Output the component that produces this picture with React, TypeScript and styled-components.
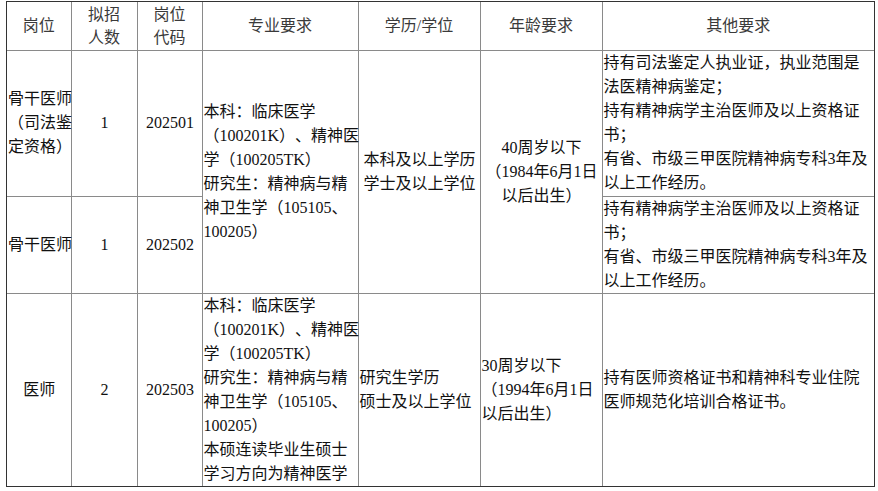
import styled, { createGlobalStyle } from 'styled-components';

const GlobalStyle = createGlobalStyle`
  html, body {
    margin: 0;
    padding: 0;
    background: #ffffff;
  }
  body {
    font-family: "Liberation Serif", "Noto Sans CJK SC", serif;
    text-spacing-trim: space-all;
  }
`;

type Align = 'left' | 'center';

interface Row {
  height: number;
  cells: {
    lines: string[];
    align?: Align;
    rowSpan?: number;
  }[];
}

const colWidths = [64, 66, 65, 156, 122, 122, 272];

const headers: string[][] = [
  ['岗位'],
  ['拟招', '人数'],
  ['岗位', '代码'],
  ['专业要求'],
  ['学历/学位'],
  ['年龄要求'],
  ['其他要求'],
];

const majorLines = [
  '本科：临床医学',
  '（100201K）、精神医',
  '学（100205TK）',
  '研究生：精神病与精',
  '神卫生学（105105、',
  '100205）',
];

const otherLines = [
  '持有精神病学主治医师及以上资格证',
  '书；',
  '有省、市级三甲医院精神病专科3年及',
  '以上工作经历。',
];

const rows: Row[] = [
  {
    height: 146,
    cells: [
      { lines: ['骨干医师', '（司法鉴', '定资格）'] },
      { lines: ['1'] },
      { lines: ['202501'] },
      { lines: majorLines, align: 'left', rowSpan: 2 },
      { lines: ['本科及以上学历', '学士及以上学位'], rowSpan: 2 },
      { lines: ['40周岁以下', '（1984年6月1日', '以后出生）'], rowSpan: 2 },
      {
        lines: ['持有司法鉴定人执业证，执业范围是', '法医精神病鉴定；', ...otherLines],
        align: 'left',
      },
    ],
  },
  {
    height: 96,
    cells: [
      { lines: ['骨干医师'] },
      { lines: ['1'] },
      { lines: ['202502'] },
      { lines: otherLines, align: 'left' },
    ],
  },
  {
    height: 192,
    cells: [
      { lines: ['医师'] },
      { lines: ['2'] },
      { lines: ['202503'] },
      {
        lines: [...majorLines, '本硕连读毕业生硕士', '学习方向为精神医学'],
        align: 'left',
      },
      { lines: ['研究生学历', '硕士及以上学位'], align: 'left' },
      { lines: ['30周岁以下', '（1994年6月1日', '以后出生）'], align: 'left' },
      { lines: ['持有医师资格证书和精神科专业住院', '医师规范化培训合格证书。'], align: 'left' },
    ],
  },
];

const App = () => {
  return (
    <>
      <GlobalStyle />
      <Frame>
        <Table>
          <colgroup>
            {colWidths.map((w, i) => (
              <col key={i} style={{ width: w }} />
            ))}
          </colgroup>
          <thead>
            <HeadRow>
              {headers.map((h, i) => (
                <HeadCell key={i}>
                  {h.map((line, j) => (
                    <Line key={j}>{line}</Line>
                  ))}
                </HeadCell>
              ))}
            </HeadRow>
          </thead>
          <tbody>
            {rows.map((row, i) => (
              <tr key={i} style={{ height: row.height }}>
                {row.cells.map((cell, j) => (
                  <Cell key={j} rowSpan={cell.rowSpan} $align={cell.align || 'center'}>
                    {cell.lines.map((line, k) => (
                      <Line key={k}>{line}</Line>
                    ))}
                  </Cell>
                ))}
              </tr>
            ))}
          </tbody>
        </Table>
      </Frame>
    </>
  );
};

export default App;

const Frame = styled.div`
  margin: 1px 0 0 6px;
  width: 867px;
  border: 1px solid #333333;
`;

const Table = styled.table`
  width: 867px;
  table-layout: fixed;
  border-collapse: collapse;
  border-style: hidden;
`;

const HeadRow = styled.tr`
  height: 48px;
`;

const HeadCell = styled.th`
  padding: 0;
  border: 1px solid #8a8a8a;
  font-weight: 400;
  font-size: 16px;
  line-height: 23px;
  color: #3a3a3a;
  text-align: center;
  vertical-align: middle;
`;

const Cell = styled.td<{ $align: Align }>`
  padding: 0 0 0 1px;
  border: 1px solid #8a8a8a;
  font-size: 16px;
  line-height: 24px;
  color: #111111;
  text-align: ${({ $align }) => $align};
  vertical-align: middle;
`;

const Line = styled.div`
  white-space: nowrap;
`;
